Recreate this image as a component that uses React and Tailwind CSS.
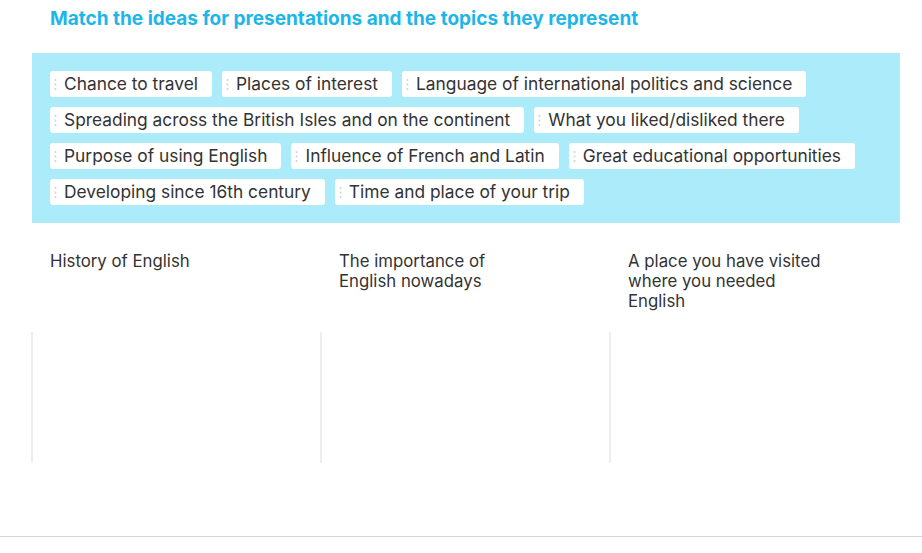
import React from 'react';

const ideas = [
    "Chance to travel",
    "Places of interest",
    "Language of international politics and science",
    "Spreading across the British Isles and on the continent",
    "What you liked/disliked there",
    "Purpose of using English",
    "Influence of French and Latin",
    "Great educational opportunities",
    "Developing since 16th century",
    "Time and place of your trip",
];

const topics = [
    "History of English",
    "The importance of English nowadays",
    "A place you have visited where you needed English",
];

// Tirador de arrastre (tres puntos verticales)
const Handle = () => (
    <svg width="3" height="13" viewBox="0 0 3 13" className="mr-[7px] shrink-0">
        <circle cx="1.5" cy="2" r="1" fill="#d0d0d0" />
        <circle cx="1.5" cy="6.5" r="1" fill="#d0d0d0" />
        <circle cx="1.5" cy="11" r="1" fill="#d0d0d0" />
    </svg>
);

const App = () => {
    return (
        <div className="w-[922px] h-[553px] bg-white overflow-hidden" style={{ fontFamily: 'Inter, "Noto Sans", sans-serif' }}>
            <div className="flex flex-col h-full">
                <h1 className="pl-[50px] pt-[7px] text-[19px] leading-[24px] font-bold text-[#1db6e8]">
                    Match the ideas for presentations and the topics they represent
                </h1>

                {/* Ideas para arrastrar */}
                <div className="ml-[32px] mr-[22px] mt-[22px] bg-[#acebfa] px-[18px] py-[18px] flex flex-wrap gap-[10px]">
                    {ideas.map((idea, index) => (
                        <div
                            key={index}
                            className="flex items-center h-[26px] bg-white rounded-[3px] pl-[4px] pr-[14px] text-[17.35px] leading-[26px] text-[#333]"
                        >
                            <Handle />
                            <span>{idea}</span>
                        </div>
                    ))}
                </div>

                {/* Columnas de temas */}
                <div className="ml-[31px] mr-[24px] mt-[18px] grid grid-cols-3">
                    {topics.map((topic, index) => (
                        <div key={index} className="flex flex-col">
                            <div className="h-[91px] pt-[10px] pl-[19px]">
                                <p className="max-w-[200px] text-[16.8px] leading-[20px] text-[#333]">{topic}</p>
                            </div>
                            <div className="h-[131px] border-l-2 border-[#eeeeee]"></div>
                        </div>
                    ))}
                </div>

                <div className="mt-[73px] border-b border-[#d6d6d6]"></div>
            </div>
        </div>
    );
};

export default App;
